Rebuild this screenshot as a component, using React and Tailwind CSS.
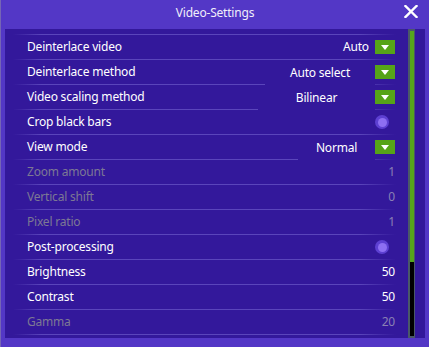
import React from 'react';

const rows = [
  { label: 'Deinterlace video', type: 'select', value: 'Auto', box: 38, cover: false },
  { label: 'Deinterlace method', type: 'select', value: 'Auto select', box: 110, cover: true },
  { label: 'Video scaling method', type: 'select', value: 'Bilinear', box: 117, cover: true },
  { label: 'Crop black bars', type: 'radio' },
  { label: 'View mode', type: 'select', value: 'Normal', box: 77, cover: true },
  { label: 'Zoom amount', type: 'number', value: '1', disabled: true },
  { label: 'Vertical shift', type: 'number', value: '0', disabled: true },
  { label: 'Pixel ratio', type: 'number', value: '1', disabled: true },
  { label: 'Post-processing', type: 'radio' },
  { label: 'Brightness', type: 'number', value: '50' },
  { label: 'Contrast', type: 'number', value: '50' },
  { label: 'Gamma', type: 'number', value: '20', disabled: true },
];

const Separator = () => (
  <div className="h-px w-full bg-[linear-gradient(to_right,transparent_2%,#5a45bb_9%,#5a45bb_88%,transparent_97%)]" />
);

const DropButton = () => (
  <div className="w-[20px] h-[14px] bg-[#56a318] flex items-center justify-center">
    <svg width="8" height="5" viewBox="0 0 8 5">
      <path d="M0 0 H8 L4 5 Z" fill="#ffffff" />
    </svg>
  </div>
);

const Radio = () => (
  <div className="w-[14px] h-[14px] rounded-full bg-[#5d40d2] flex items-center justify-center mr-[6px]">
    <div className="w-[9px] h-[9px] rounded-full bg-[#8d6ff2]" />
  </div>
);

const Row = ({ row }) => {
  const labelColor = row.disabled ? 'text-[#7d7894]' : 'text-white';
  return (
    <div className="flex flex-col">
      <Separator />
      <div className="h-[24px] flex items-center pl-[22px] pr-[13px]">
        <span className={`flex-1 ${labelColor}`}>{row.label}</span>
        {row.type === 'select' && (
          <div className="flex items-center">
            <div
              className={`h-[24px] flex items-center justify-center text-white ${
                row.cover ? 'relative z-10 -mb-[2px] h-[25px] bg-[#33189b]' : ''
              }`}
              style={{ width: row.box }}
            >
              {row.value}
            </div>
            <DropButton />
          </div>
        )}
        {row.type === 'radio' && <Radio />}
        {row.type === 'number' && (
          <span className={row.disabled ? 'text-[#8a80b4]' : 'text-white'}>{row.value}</span>
        )}
      </div>
    </div>
  );
};

export default function App() {
  return (
    <div
      className="w-[429px] h-[347px] bg-[#5337c6] flex flex-col border-l border-[#7565b5] text-[12px] tracking-[-0.2px] leading-none"
      style={{ fontFamily: '"Noto Sans", "Open Sans", sans-serif' }}
    >
      <div className="h-[26px] flex items-center justify-center relative">
        <span className="text-[#f0eefa]">Video-Settings</span>
        <svg
          className="absolute right-[11px] top-[5px]"
          width="14"
          height="13"
          viewBox="0 0 14 13"
        >
          <path d="M1.5 1 L12.5 12 M12.5 1 L1.5 12" stroke="#ffffff" strokeWidth="2.4" strokeLinecap="square" />
        </svg>
      </div>
      <div className="mt-[3px] ml-[4px] mr-[4px] h-[309px] bg-[#33189b] flex">
        <div className="flex-1 pt-[5px] flex flex-col">
          {rows.map((r) => (
            <Row key={r.label} row={r} />
          ))}
          <Separator />
        </div>
        <div className="w-[7px] h-full bg-[#4a5868] pl-[2px] pr-[1px] py-[2px] flex flex-col">
          <div className="h-[231px] bg-[#56a51c]" />
          <div className="flex-1 bg-black" />
        </div>
        <div className="w-[10px]" />
      </div>
    </div>
  );
}
